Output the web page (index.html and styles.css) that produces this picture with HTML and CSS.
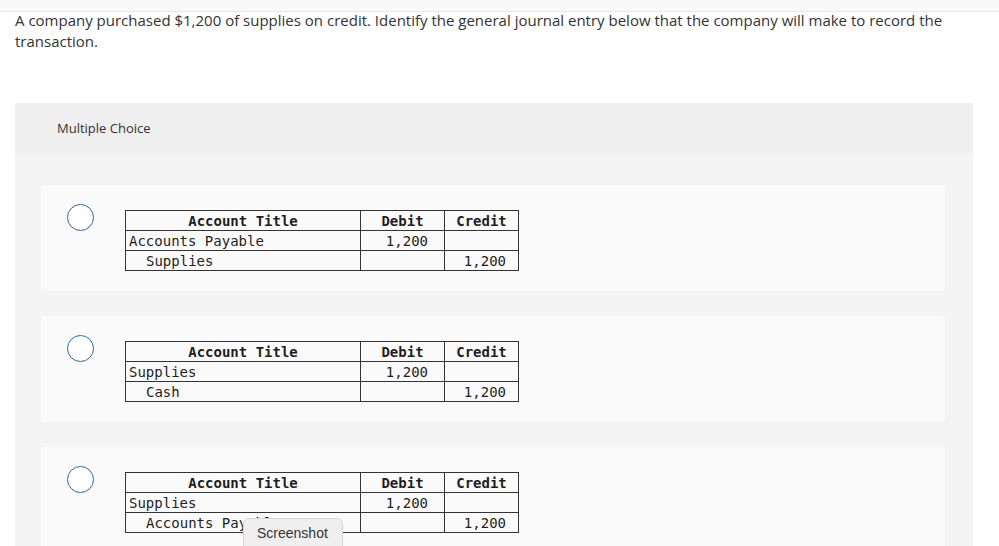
FILE: index.html
```html
<!DOCTYPE html>
<html>
<head>
<meta charset="utf-8">
<link rel="stylesheet" href="styles.css">
</head>
<body>
<div class="topbar"></div>
<p class="question">A company purchased $1,200 of supplies on credit. Identify the general journal entry below that the company will make to record the transaction.</p>
<section class="panel">
  <div class="panel-head">Multiple Choice</div>
  <div class="panel-body">
    <div class="choice">
      <span class="radio"></span>
      <table class="journal">
        <tr><th class="c-title">Account Title</th><th class="c-debit">Debit</th><th class="c-credit">Credit</th></tr>
        <tr><td class="acct">Accounts Payable</td><td class="num dr">1,200</td><td></td></tr>
        <tr><td class="acct indent">Supplies</td><td></td><td class="num cr">1,200</td></tr>
      </table>
    </div>
    <div class="choice">
      <span class="radio"></span>
      <table class="journal">
        <tr><th class="c-title">Account Title</th><th class="c-debit">Debit</th><th class="c-credit">Credit</th></tr>
        <tr><td class="acct">Supplies</td><td class="num dr">1,200</td><td></td></tr>
        <tr><td class="acct indent">Cash</td><td></td><td class="num cr">1,200</td></tr>
      </table>
    </div>
    <div class="choice">
      <span class="radio"></span>
      <table class="journal">
        <tr><th class="c-title">Account Title</th><th class="c-debit">Debit</th><th class="c-credit">Credit</th></tr>
        <tr><td class="acct">Supplies</td><td class="num dr">1,200</td><td></td></tr>
        <tr><td class="acct indent">Accounts Payable</td><td></td><td class="num cr">1,200</td></tr>
      </table>
    </div>
  </div>
</section>
<div class="tooltip">Screenshot</div>
</body>
</html>
```

FILE: styles.css
```css
html, body {
  margin: 0;
  padding: 0;
  overflow: hidden;
  background: #ffffff;
}
body {
  position: relative;
  height: 546px;
  font-family: "Open Sans", "Lato", sans-serif;
  color: #333333;
}
.topbar {
  height: 11px;
  background: #f9f9f9;
  border-bottom: 1px solid #e8e8e8;
}
.question {
  margin: -2px 0 0 15px;
  font-size: 15px;
  line-height: 21px;
  width: 960px;
  color: #333;
}
.panel {
  margin: 51px 26px 0 15px;
  background: #f4f4f4;
}
.panel-head {
  height: 50px;
  background: #efefef;
  padding-left: 42px;
  display: flex;
  align-items: center;
  font-size: 13px;
  color: #333;
}
.panel-body {
  padding: 32px 28px 20px 26px;
  display: flex;
  flex-direction: column;
  gap: 25px;
}
.choice {
  background: #fafafa;
  height: 106px;
  border-radius: 3px;
  display: flex;
  align-items: flex-start;
  padding: 19px 0 0 26px;
  box-sizing: border-box;
}
.radio {
  width: 25px;
  height: 25px;
  border: 1.3px solid #2467a6;
  border-radius: 50%;
  background: #fff;
  flex: none;
}
.journal {
  margin: 6px 0 0 31px;
  border-collapse: collapse;
  font-family: "DejaVu Sans Mono", monospace;
  font-size: 14px;
  color: #1e1e1e;
  background: #fafafa;
}
.journal th, .journal td {
  border: 1px solid #333;
  height: 19px;
  padding: 0;
  line-height: 18px;
}
.journal th {
  font-weight: bold;
  text-align: center;
}
.c-title { width: 234px; }
.c-debit { width: 83px; }
.c-credit { width: 73px; }
.acct {
  padding-left: 3px !important;
  text-align: left;
}
.indent {
  padding-left: 20px !important;
}
.num { text-align: right; }
.dr { padding-right: 16px !important; }
.cr { padding-right: 12px !important; }
.tooltip {
  position: absolute;
  left: 243px;
  top: 518px;
  width: 100px;
  height: 34px;
  box-sizing: border-box;
  background: #efefef;
  border: 1px solid #d4d4d4;
  border-radius: 6px;
  font-family: "Liberation Sans", sans-serif;
  font-size: 14px;
  color: #333;
  padding: 6px 0 0 13px;
}
```
